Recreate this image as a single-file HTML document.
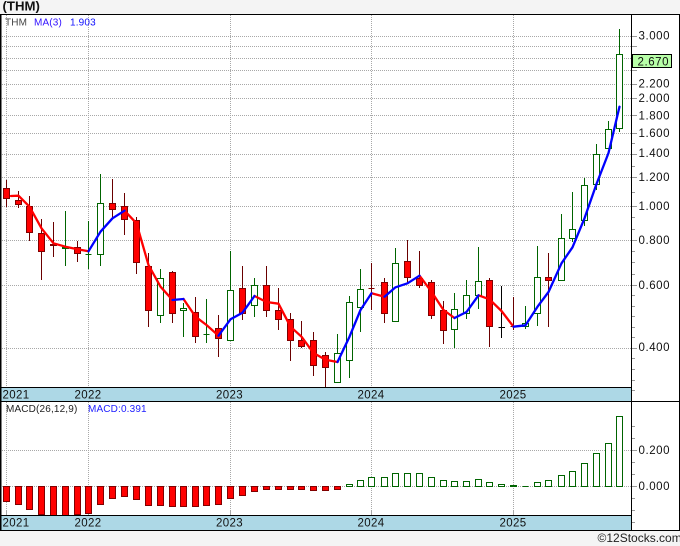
<!DOCTYPE html>
<html><head><meta charset="utf-8"><style>
html,body{margin:0;padding:0;background:#f4f4f4;width:680px;height:546px;overflow:hidden}
svg{display:block}
text{font-family:"Liberation Sans",sans-serif;fill:#111}
.p{font-size:11.5px;letter-spacing:.55px}
.y{font-size:11.5px;letter-spacing:.35px}
.s{font-size:10px;letter-spacing:.15px}
</style></head><body>
<svg width="680" height="546" viewBox="0 0 680 546" xmlns="http://www.w3.org/2000/svg">
<rect x="0" y="0" width="680" height="546" fill="#f4f4f4"/>
<rect x="0" y="14" width="680" height="517" fill="#fff"/>
<rect x="0" y="388" width="632" height="14" fill="#add8e6"/>
<rect x="0" y="516" width="632" height="15" fill="#add8e6"/>
<path d="M0 36.5H632M0 46.5H632M0 58.5H632M0 70.5H632M0 84.5H632M0 98.5H632M0 115.5H632M0 133.5H632M0 154.5H632M0 177.5H632M0 206.5H632M0 240.5H632M0 285.5H632M0 348.5H632M0 450.5H632M0 486.5H632M6.5 15V388M88.5 15V388M230.5 15V388M371.5 15V388M513.5 15V388M6.5 402V510M88.5 402V510M230.5 402V510M371.5 402V510M513.5 402V510" stroke="#a8a8a8" stroke-width="1" stroke-dasharray="1 1" fill="none"/>
<path d="M6.5 510V516M88.5 510V516M230.5 510V516M371.5 510V516M513.5 510V516" stroke="#a8a8a8" stroke-width="1" fill="none"/>
<path d="M632 36.5H637M632 46.5H637M632 58.5H637M632 70.5H637M632 84.5H637M632 98.5H637M632 115.5H637M632 133.5H637M632 154.5H637M632 177.5H637M632 206.5H637M632 240.5H637M632 285.5H637M632 348.5H637M632 143.5H635M632 166.5H635M632 192.5H635M632 217.5H635M632 229.5H635M632 251.5H635M632 262.5H635M632 274.5H635M632 295.5H635M632 306.5H635M632 316.5H635M632 327.5H635M632 337.5H635M632 358.5H635M632 369.5H635M632 380.5H635M632 390.5H635M632 426.5H635M632 438.5H635M632 450.5H637M632 462.5H635M632 474.5H635M632 486.5H637M632 498.5H635M632 510.5H635M632 522.5H635" stroke="#999" stroke-width="1" fill="none"/>
<path fill="none" stroke="#6a0000" stroke-width="1" d="M6.5 180V207M18.5 191V208M29.5 196V241M41.5 219V280M53.5 222V257M77.5 241V262M112.5 179V218M124.5 193V235M136.5 217V274M148.5 253V327M172.5 271V323M195.5 297V343M218.5 315V357M242.5 266V320M266.5 266V317M278.5 288V330M290.5 313V361M301.5 321V348M313.5 332V376M325.5 352V387M371.5 263V310M384.5 278V323M407.5 240V283M419.5 251V288M431.5 280V319M443.5 301V344M489.5 278V347M513.5 297V330M548.5 253V327"/>
<path fill="none" stroke="#006400" stroke-width="1" d="M65.5 211V266M88.5 221V269M100.5 174V266M160.5 269V323M183.5 303V337M206.5 299V343M230.5 251V340M254.5 278V317M337.5 334V382M349.5 296V378M360.5 269V332M395.5 248V321M454.5 293V348M466.5 280V319M478.5 247V309M525.5 306V329M537.5 246V326M561.5 214V280M572.5 192V242M584.5 178V226M596.5 144V190M608.5 121V148M619.5 29V132"/>
<path fill="none" stroke="#000" stroke-width="1" d="M501.5 286V338M498.5 327.5H505"/>
<path fill="#f00" stroke="#800000" stroke-width="1" d="M3.5 188.5h6v10h-6zM15.5 200.5h6v4h-6zM26.5 206.5h6v26h-6zM38.5 233.5h6v18h-6zM50.5 244.5h6v1h-6zM74.5 247.5h6v6h-6zM109.5 203.5h6v6h-6zM121.5 206.5h6v13h-6zM133.5 220.5h6v42h-6zM145.5 266.5h6v44h-6zM169.5 272.5h6v41h-6zM192.5 312.5h6v24h-6zM215.5 328.5h6v10h-6zM239.5 288.5h6v25h-6zM263.5 285.5h6v25h-6zM275.5 310.5h6v9h-6zM287.5 319.5h6v21h-6zM298.5 340.5h6v6h-6zM310.5 340.5h6v25h-6zM322.5 355.5h6v12h-6zM368.5 288.5h6v0h-6zM381.5 282.5h6v31h-6zM404.5 261.5h6v16h-6zM416.5 278.5h6v7h-6zM428.5 282.5h6v33h-6zM440.5 310.5h6v20h-6zM486.5 280.5h6v46h-6zM510.5 326.5h6v0h-6zM545.5 277.5h6v3h-6z"/>
<path fill="#fff" stroke="#006400" stroke-width="1" d="M62.5 247.5h6v1h-6zM85.5 254.5h6v0h-6zM97.5 203.5h6v51h-6zM157.5 278.5h6v37h-6zM180.5 308.5h6v2h-6zM203.5 334.5h6v0h-6zM227.5 290.5h6v50h-6zM251.5 285.5h6v20h-6zM334.5 353.5h6v29h-6zM346.5 302.5h6v58h-6zM357.5 289.5h6v18h-6zM392.5 263.5h6v58h-6zM451.5 309.5h6v20h-6zM463.5 295.5h6v18h-6zM475.5 281.5h6v14h-6zM522.5 323.5h6v3h-6zM534.5 277.5h6v36h-6zM558.5 238.5h6v42h-6zM569.5 229.5h6v9h-6zM581.5 185.5h6v35h-6zM593.5 154.5h6v30h-6zM605.5 129.5h6v19h-6zM616.5 54.5h6v74h-6z"/>
<g fill="none" stroke-width="2.3" stroke-linejoin="round" stroke-linecap="round">
<path stroke="#f00" d="M11 196L18.5 195.7 29.5 206.7 41.5 228.3 53.5 243.3 65.5 246.7 77.5 249.3 88.5 251.3M124.5 210.7L136.5 223.3 148.5 265 160.5 286.7 172.5 300M183.5 299L195.5 316.7 206.5 325 218.5 335.7M254.5 296L266.5 302 278.5 303.7 290.5 326.7 301.5 336.7 313.5 353 325.5 359.7 337.5 362M371.5 293.3L384.5 296.7M419.5 275.7L431.5 291.7 443.5 310 454.5 318M478.5 295.3L489.5 299.3 501.5 311 513.5 326.7"/>
<path stroke="#00f" d="M88.5 251.3L100.5 231.7 112.5 218.3 124.5 210.7M172.5 300L183.5 299M218.5 335.7L230.5 319.3 242.5 312.7 254.5 296M337.5 362L349.5 336.7 360.5 310 371.5 293.3M384.5 296.7L395.5 287.3 407.5 283.3 419.5 275.7M454.5 318L466.5 312 478.5 295.3M513.5 326.7L525.5 325.3 537.5 306.7 548.5 292 561.5 263.3 572.5 247.3 584.5 218.3 596.5 184 608.5 153 619.5 106.7"/>
</g>
<path fill="#f00" stroke="#800000" stroke-width="1" d="M3.5 486.5h6v15h-6zM15.5 486.5h6v18h-6zM26.5 486.5h6v23h-6zM38.5 486.5h6v28h-6zM50.5 486.5h6v29h-6zM62.5 486.5h6v29h-6zM74.5 486.5h6v28h-6zM85.5 486.5h6v27h-6zM97.5 486.5h6v18h-6zM109.5 486.5h6v12h-6zM121.5 486.5h6v10h-6zM133.5 486.5h6v13h-6zM145.5 486.5h6v19h-6zM157.5 486.5h6v19h-6zM169.5 486.5h6v20h-6zM180.5 486.5h6v20h-6zM192.5 486.5h6v20h-6zM203.5 486.5h6v19h-6zM215.5 486.5h6v18h-6zM227.5 486.5h6v12h-6zM239.5 486.5h6v9h-6zM251.5 486.5h6v5h-6zM263.5 486.5h6v3h-6zM275.5 486.5h6v3h-6zM287.5 486.5h6v3h-6zM298.5 486.5h6v3h-6zM310.5 486.5h6v4h-6zM322.5 486.5h6v4h-6zM334.5 486.5h6v3h-6z"/>
<path fill="#fff" stroke="#006400" stroke-width="1" d="M346.5 484.5h6v2h-6zM357.5 480.5h6v6h-6zM368.5 477.5h6v9h-6zM381.5 477.5h6v9h-6zM392.5 473.5h6v13h-6zM404.5 473.5h6v13h-6zM416.5 473.5h6v13h-6zM428.5 477.5h6v9h-6zM440.5 480.5h6v6h-6zM451.5 481.5h6v5h-6zM463.5 481.5h6v5h-6zM475.5 479.5h6v7h-6zM486.5 482.5h6v4h-6zM498.5 484.5h6v2h-6zM510.5 485.5h6v1h-6zM522.5 486.5h6v0h-6zM534.5 482.5h6v4h-6zM545.5 480.5h6v6h-6zM558.5 475.5h6v11h-6zM569.5 471.5h6v15h-6zM581.5 463.5h6v23h-6zM593.5 453.5h6v33h-6zM605.5 443.5h6v43h-6zM616.5 416.5h6v70h-6z"/>
<path d="M0 14.5H680M0 387.5H632M0 401.5H680M0 515.5H632M0 530.5H680M631.5 14V531M679.5 14V531" stroke="#000" stroke-width="1" fill="none"/>
<path d="M.75 14V531" stroke="#000" stroke-width="1.5" fill="none"/>
<rect x="632.5" y="54.5" width="39" height="13" fill="#b8ffa8" stroke="#000"/>
<text x="2.5" y="10.5" style="font-size:13.2px;font-weight:bold">(THM)</text>
<text x="5" y="25.5" class="s" style="fill:#444">THM</text>
<text x="34" y="25.5" class="s" style="fill:#3010ff">MA(3)</text>
<text x="70" y="25.5" class="s" style="fill:#1010ff">1.903</text>
<text x="6" y="412" class="s" style="fill:#222">MACD(26,12,9)</text>
<text x="88" y="412" class="s" style="fill:#2020ff">MACD:0.391</text>
<text x="638.5" y="39.5" class="p">3.000</text>
<text x="637.5" y="65.5" class="p">2.670</text>
<text x="638.5" y="87.5" class="p">2.200</text>
<text x="638.5" y="102" class="p">2.000</text>
<text x="638.5" y="119.5" class="p">1.800</text>
<text x="638.5" y="137" class="p">1.600</text>
<text x="638.5" y="157" class="p">1.400</text>
<text x="638.5" y="181" class="p">1.200</text>
<text x="638.5" y="210" class="p">1.000</text>
<text x="638.5" y="244" class="p">0.800</text>
<text x="638.5" y="289" class="p">0.600</text>
<text x="638.5" y="351" class="p">0.400</text>
<text x="638.5" y="454" class="p">0.200</text>
<text x="638.5" y="490" class="p">0.000</text>
<text x="2.5" y="398.5" class="y">2021</text>
<text x="74.5" y="398.5" class="y">2022</text>
<text x="216" y="398.5" class="y">2023</text>
<text x="357.5" y="398.5" class="y">2024</text>
<text x="499.5" y="398.5" class="y">2025</text>
<text x="2.5" y="526.5" class="y">2021</text>
<text x="74.5" y="526.5" class="y">2022</text>
<text x="216" y="526.5" class="y">2023</text>
<text x="357.5" y="526.5" class="y">2024</text>
<text x="499.5" y="526.5" class="y">2025</text>
<text x="597.5" y="542" style="font-size:12px;fill:#222">©12Stocks.com</text>
</svg>
</body></html>
